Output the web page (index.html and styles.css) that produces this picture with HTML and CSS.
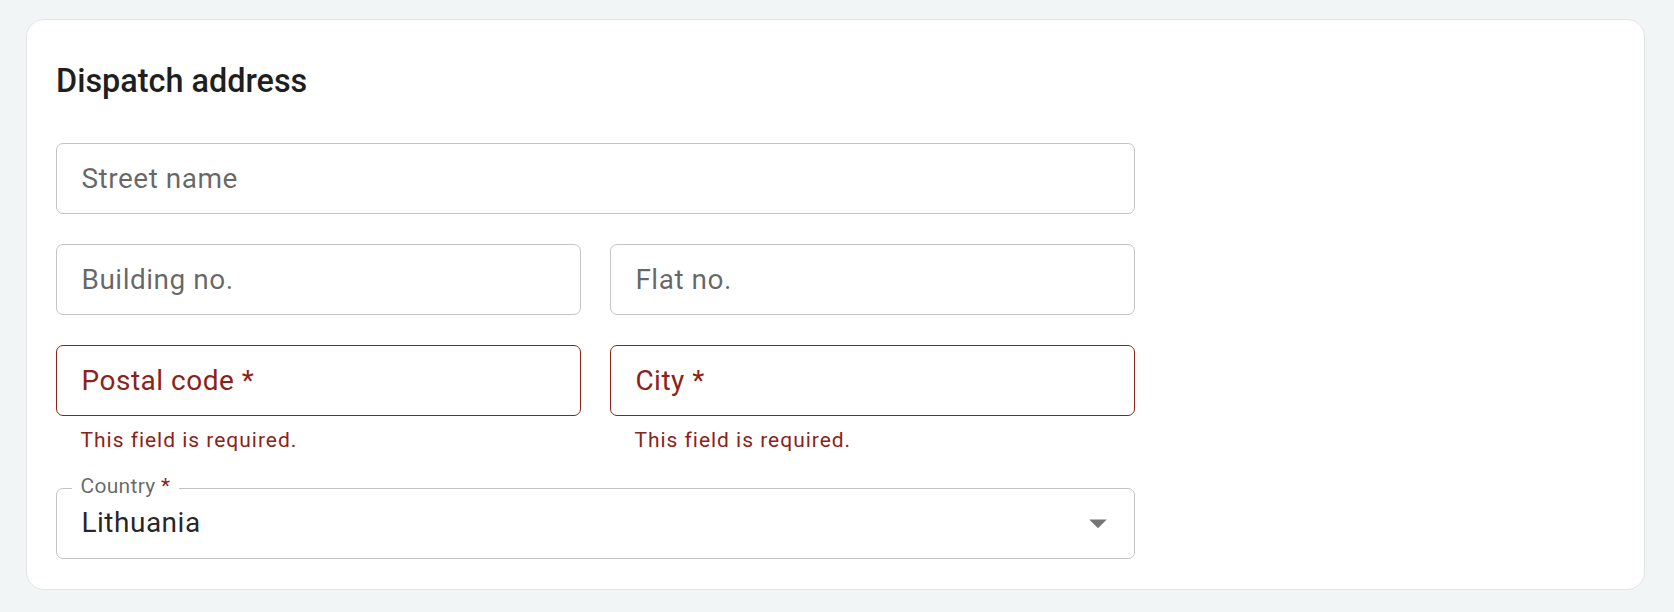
FILE: index.html
```html
<!DOCTYPE html>
<html lang="en">
<head>
<meta charset="utf-8">
<title>Dispatch address</title>
<link rel="stylesheet" href="styles.css">
</head>
<body>
  <main class="page">
    <section class="card">
      <h2 class="card-title">Dispatch address</h2>
      <div class="form">
        <div class="field"><span class="placeholder">Street name</span></div>
        <div class="row">
          <div class="field"><span class="placeholder">Building no.</span></div>
          <div class="field"><span class="placeholder">Flat no.</span></div>
        </div>
        <div class="row">
          <div class="group">
            <div class="field field-error"><span class="placeholder">Postal code *</span></div>
            <p class="helper">This field is required.</p>
          </div>
          <div class="group">
            <div class="field field-error"><span class="placeholder">City *</span></div>
            <p class="helper">This field is required.</p>
          </div>
        </div>
        <div class="field field-select">
          <span class="float-label">Country<span class="req"> *</span></span>
          <span class="value">Lithuania</span>
          <svg class="arrow" viewBox="0 0 24 24" aria-hidden="true"><path d="M7 10l5 5 5-5z"/></svg>
        </div>
      </div>
    </section>
  </main>
</body>
</html>
```

FILE: styles.css
```css
html, body {
  margin: 0;
  padding: 0;
}

body {
  background: #f2f5f6;
  font-family: Roboto, "Liberation Sans", Arial, sans-serif;
  color: rgba(0, 0, 0, 0.87);
}

.page {
  padding: 19.3px 28.7px 22px 26.3px;
}

.card {
  background: #ffffff;
  border: 1px solid #e2e4e5;
  border-radius: 18px;
  padding: 28px 28px 30.2px 28.7px;
}

.card-title {
  margin: 14.3px 0 44.7px 0;
  font-size: 32.4px;
  line-height: 36px;
  font-weight: 500;
  color: #1f1f1f;
}

.form {
  width: 1079px;
  display: flex;
  flex-direction: column;
  gap: 29.8px;
}

.row {
  display: grid;
  grid-template-columns: 1fr 1fr;
  column-gap: 28.8px;
}

.field {
  position: relative;
  box-sizing: border-box;
  height: 71px;
  border: 1px solid #c4c4c4;
  border-radius: 7px;
  padding: 0 24.5px;
  display: flex;
  align-items: center;
  font-size: 28px;
  letter-spacing: 0.5px;
}

.placeholder {
  color: rgba(0, 0, 0, 0.6);
  line-height: normal;
}

.field-error {
  border-color: #8c2218;
}

.field-error .placeholder {
  color: #8c2218;
}

.helper {
  margin: 6px 0 0 0;
  padding-left: 24.5px;
  font-size: 21px;
  line-height: 36px;
  letter-spacing: 0.98px;
  color: #8c2218;
}

.field-select {
  padding-right: 15.3px;
}

.value {
  flex: 1;
  color: rgba(0, 0, 0, 0.87);
  line-height: normal;
  margin-top: -2px;
}

.float-label {
  position: absolute;
  left: 14.75px;
  top: -14.9px;
  padding: 0 8.75px;
  background: #ffffff;
  font-size: 21px;
  line-height: normal;
  letter-spacing: 0.3px;
  color: rgba(0, 0, 0, 0.6);
}

.req {
  color: #8c2218;
}

.arrow {
  width: 42px;
  height: 42px;
  fill: rgba(0, 0, 0, 0.54);
  flex: none;
}
```
